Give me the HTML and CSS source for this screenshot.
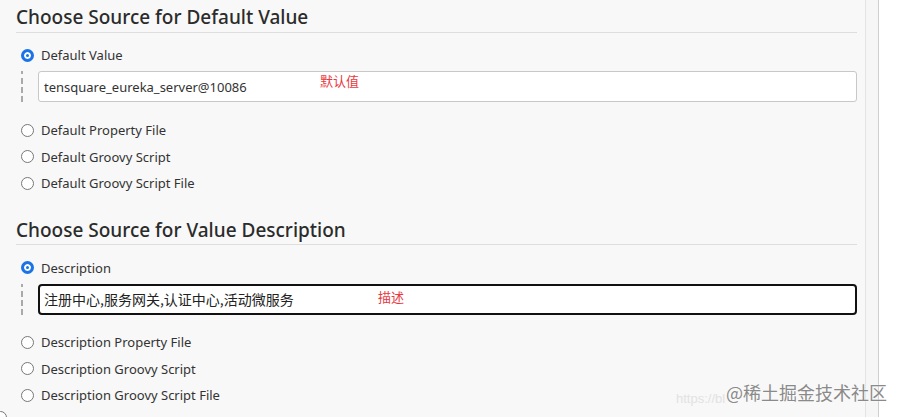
FILE: index.html
```html
<!DOCTYPE html>
<html lang="zh">
<head>
<meta charset="utf-8">
<link rel="stylesheet" href="styles.css">
</head>
<body>
<div class="page">
  <main class="main">
    <section class="section s1">
      <h2 class="heading">Choose Source for Default Value</h2>
      <div class="radio-row first"><span class="radio checked"></span><span class="label">Default Value</span></div>
      <div class="nested">
        <div class="field"><span class="value">tensquare_eureka_server@10086</span><span class="note note-a">默认值</span></div>
      </div>
      <div class="radio-row"><span class="radio"></span><span class="label">Default Property File</span></div>
      <div class="radio-row"><span class="radio"></span><span class="label">Default Groovy Script</span></div>
      <div class="radio-row"><span class="radio"></span><span class="label">Default Groovy Script File</span></div>
    </section>
    <section class="section s2">
      <h2 class="heading">Choose Source for Value Description</h2>
      <div class="radio-row first"><span class="radio checked"></span><span class="label">Description</span></div>
      <div class="nested">
        <div class="field focused"><span class="value cjk">注册中心,服务网关,认证中心,活动微服务</span><span class="note note-b">描述</span></div>
      </div>
      <div class="radio-row"><span class="radio"></span><span class="label">Description Property File</span></div>
      <div class="radio-row"><span class="radio"></span><span class="label">Description Groovy Script</span></div>
      <div class="radio-row"><span class="radio"></span><span class="label">Description Groovy Script File</span></div>
      <div class="radio-row cut"><span class="radio"></span></div>
    </section>
  </main>
  <div class="strip"></div>
  <div class="blank"></div>
</div>
<div class="watermark"><span class="wm-url">https://bl</span><span class="wm-main">@稀土掘金技术社区</span></div>
</body>
</html>
```
FILE: styles.css
```css
html, body {
  margin: 0;
  padding: 0;
  height: 100%;
  overflow: hidden;
}
body {
  font-family: "Noto Sans", "Noto Sans CJK SC", sans-serif;
  color: #333;
  background: #fff;
}
.page {
  display: flex;
  height: 417px;
  position: relative;
  overflow: hidden;
}
.main {
  width: 841px;
  padding: 0 8px 0 16px;
  background: #f8f8f8;
  border-right: 1px solid #e4e4e4;
  overflow: hidden;
}
.strip {
  width: 12px;
  background: #f6f6f6;
  border-right: 1px solid #cfcfcf;
}
.blank {
  flex: 1;
  background: #fff;
}
.heading {
  margin: 0;
  height: 33px;
  font-size: 19px;
  font-weight: 500;
  color: #2b2b2b;
  border-bottom: 1px solid #dedede;
  white-space: nowrap;
  display: flex;
  align-items: flex-end;
  line-height: 1;
  padding-bottom: 5px;
  box-sizing: border-box;
}
.s2 .heading { padding-bottom: 4px; }
.s2 {
  margin-top: 15px;
}
.radio-row {
  height: 26.5px;
  display: flex;
  align-items: center;
  padding-left: 5px;
}
.s1 .radio-row.first { margin-top: 9px; height: 26px; }
.s2 .radio-row.first { margin-top: 10px; height: 26px; }
.radio {
  width: 11px;
  height: 11px;
  border: 1px solid #777;
  border-radius: 50%;
  background: #fff;
  box-sizing: content-box;
  flex: none;
}
.radio.checked {
  width: 7px;
  height: 7px;
  border: 3px solid #1a73e8;
  background: #1a73e8;
  box-shadow: inset 0 0 0 2px #fff;
}
.label {
  margin-left: 7px;
  font-size: 13px;
  color: #333;
  white-space: nowrap;
}
.nested {
  margin: 3px 0 14px 5px;
  padding-left: 15px;
  border-left: 2px dashed #b5b5b5;
  border-image: repeating-linear-gradient(to bottom, #aaa 0 5px, transparent 5px 8px) 2;
}
.s1 .nested { margin-bottom: 15px; }
.s2 .nested { margin-bottom: 14.5px; }
.field {
  position: relative;
  height: 31px;
  box-sizing: border-box;
  border: 1px solid #c8c8c8;
  border-radius: 3px;
  background: #fff;
  display: flex;
  align-items: center;
  padding-left: 5px;
}
.field.focused {
  border: 2px solid #111;
  border-radius: 4px;
  padding-left: 4px;
}
.value {
  font-size: 13px;
  color: #333;
  white-space: nowrap;
}
.value.cjk {
  font-family: "Noto Sans CJK SC", sans-serif;
  font-size: 14px;
  color: #222;
}
.note {
  position: absolute;
  color: #e8393f;
  font-family: "Noto Sans CJK SC", sans-serif;
  font-size: 13px;
  line-height: 1;
}
.note-a { left: 281px; top: 2px; }
.note-b { left: 338px; top: 4px; }
.radio-row.cut {
  margin-left: -27px;
  margin-top: -4px;
}
.watermark {
  position: absolute;
  left: 670px;
  top: 377px;
  width: 225px;
  height: 30px;
}
.wm-url {
  position: absolute;
  left: 6px;
  top: 14px;
  font-family: "Liberation Sans", sans-serif;
  font-size: 13px;
  color: #e2e2e2;
  white-space: nowrap;
}
.wm-main {
  position: absolute;
  left: 56px;
  top: 2px;
  font-family: "Noto Sans CJK SC", sans-serif;
  font-size: 18px;
  color: #8a8a8a;
  white-space: nowrap;
  text-shadow: 0 0 2px #fff;
}
```
